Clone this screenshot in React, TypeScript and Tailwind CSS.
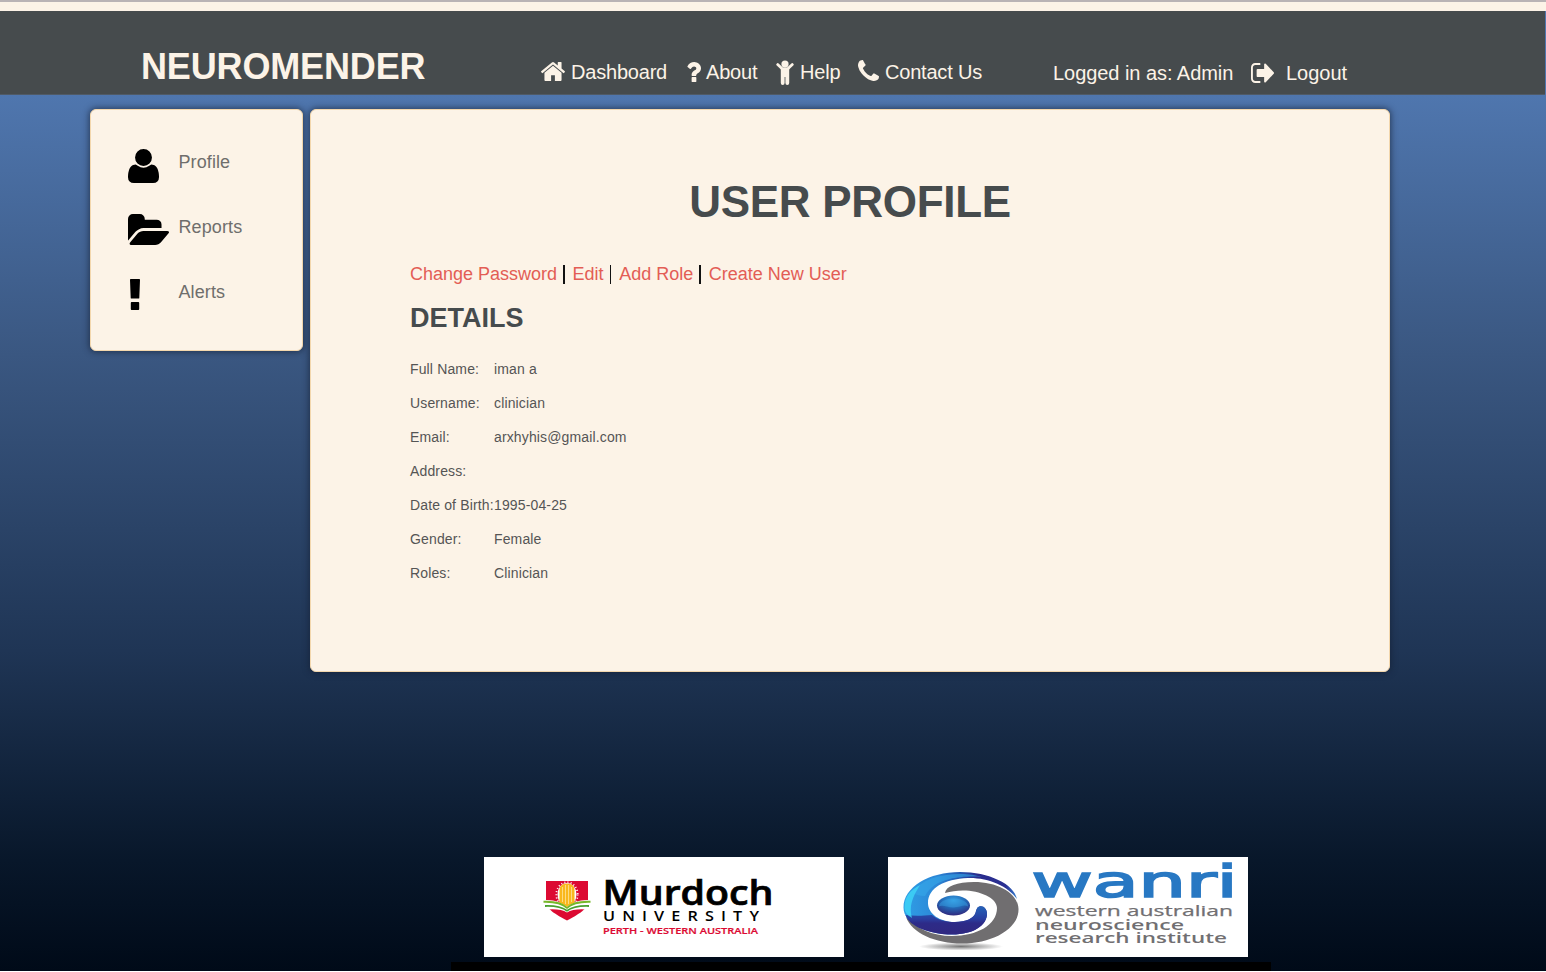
import React from 'react';

const ICONS = {
  home: 'M1408 992v480q0 26-19 45t-45 19h-384v-384h-256v384h-384q-26 0-45-19t-19-45v-480q0-1 .5-3t.5-3l575-474 575 474q1 2 1 6zm223-69l-62 74q-8 9-21 11h-3q-13 0-21-7l-692-577-692 577q-12 8-24 7-13-2-21-11l-62-74q-8-10-7-23.5t11-21.5l719-599q32-26 76-26t76 26l244 204v-195q0-14 9-23t23-9h192q14 0 23 9t9 23v408l219 182q10 8 11 21.5t-7 23.5z',
  question: 'M1088 1256v240q0 16-12 28t-28 12h-240q-16 0-28-12t-12-28v-240q0-16 12-28t28-12h240q16 0 28 12t12 28zm316-600q0 54-15.5 101t-35 76.5-55 59.5-57.5 43.5-61 35.5q-41 23-68.5 65t-27.5 67q0 17-12 32.5t-28 15.5h-240q-15 0-25.5-18.5t-10.5-37.5v-45q0-83 65-156.5t143-108.5q59-27 84-56t25-76q0-42-46.5-74t-107.5-32q-65 0-108 29-35 25-107 115-13 16-31 16-12 0-25-8l-164-125q-13-10-15.5-25t5.5-28q160-266 464-266 80 0 161 31t146 83 106 127.5 41 158.5z',
  phone: 'M1600 1240q0 27-10 70.5t-21 68.5q-21 50-122 106-94 51-186 51-27 0-52.5-3.5t-57.5-12.5-47.5-14.5-55.5-20.5-49-18q-98-35-175-83-128-79-264.5-215.5t-215.5-264.5q-48-77-83-175-3-9-18-49t-20.5-55.5-14.5-47.5-12.5-57.5-3.5-52.5q0-92 51-186 56-101 106-122 25-11 68.5-21t70.5-10q14 0 21 3 18 6 53 76 11 19 30 54t35 63.5 31 53.5q3 4 17.5 25t21.5 35.5 7 28.5q0 20-28.5 50t-62 55-62 53-28.5 46q0 9 5 22.5t8.5 20.5 14 24 11.5 19q76 137 174 235t235 174q2 1 19 11.5t24 14 20.5 8.5 22.5 5q18 0 46-28.5t53-62 55-62 50-28.5q14 0 28.5 7t35.5 21.5 25 17.5q25 15 53.5 31t63.5 35 54 30q70 35 76 53 3 7 3 21z',
  signOut: 'M704 1440q0 4 1 20t.5 26.5-3 23.5-10 19.5-20.5 6.5h-320q-119 0-203.5-84.5t-84.5-203.5v-704q0-119 84.5-203.5t203.5-84.5h320q13 0 22.5 9.5t9.5 22.5q0 4 1 20t.5 26.5-3 23.5-10 19.5-20.5 6.5h-320q-66 0-113 47t-47 113v704q0 66 47 113t113 47h312l11.5 1 11.5 3 8 5.5 7 9 2 13.5zm928-544q0 26-19 45l-544 544q-19 19-45 19t-45-19-19-45v-288h-448q-26 0-45-19t-19-45v-384q0-26 19-45t45-19h448v-288q0-26 19-45t45-19 45 19l544 544q19 19 19 45z',
  user: 'M1600 1405q0 120-73 189.5t-194 69.5h-874q-121 0-194-69.5t-73-189.5q0-53 3.5-103.5t14-109 26.5-108.5 43-97.5 62-81 85.5-53.5 111.5-20q9 0 42 21.5t74.5 48 108 48 133.5 21.5 133.5-21.5 108-48 74.5-48 42-21.5q61 0 111.5 20t85.5 53.5 62 81 43 97.5 26.5 108.5 14 109 3.5 103.5zm-320-893q0 159-112.5 271.5t-271.5 112.5-271.5-112.5-112.5-271.5 112.5-271.5 271.5-112.5 271.5 112.5 112.5 271.5z',
  folder: 'M1815 952q0 31-31 66l-336 396q-43 51-120.5 86.5t-143.5 35.5h-1088q-34 0-60.5-13t-26.5-43q0-31 31-66l336-396q43-51 120.5-86.5t143.5-35.5h1088q34 0 60.5 13t26.5 43zm-343-344v160h-832q-94 0-197 47.5t-164 119.5l-337 396-5 6q0-4-.5-12.5t-.5-12.5v-960q0-92 66-158t158-66h320q92 0 158 66t66 158v32h544q92 0 158 66t66 158z',
};

function Glyph({ d, box, className }: { d: string; box: string; className: string }) {
  return (
    <svg viewBox={box} preserveAspectRatio="none" className={`shrink-0 ${className}`} fill="currentColor">
      <path d={d} />
    </svg>
  );
}

function ChildIcon() {
  return (
    <svg viewBox="0 0 18 25" className="mt-[13px] h-[25px] w-[18px] shrink-0" fill="currentColor">
      <circle cx="9" cy="4" r="3.6" />
      <path d="M1.7 4.6 6.2 8.8h5.6l4.5-4.200" fill="none" stroke="currentColor" strokeWidth="2.8" strokeLinecap="round" strokeLinejoin="round" />
      <path d="M4.8 7.8h8.400v15.200a1.800 1.800 0 0 1-3.800 0V17h-.8v6a1.800 1.800 0 0 1-3.800 0z" />
    </svg>
  );
}

function MurdochLogo() {
  return (
    <svg viewBox="0 0 360 100" className="h-[100px] w-[360px] bg-white">
      <path d="M62 24h42v19c0 8-5 12-21 20.500C67 55 62 51 62 43z" fill="#dc0a32" />
      <ellipse cx="83" cy="37.500" rx="9.500" ry="11.500" fill="#fff" />
      <ellipse cx="83" cy="37.500" rx="10.700" ry="12.300" fill="none" stroke="#fff" strokeWidth="1.800" strokeDasharray="1 2.200" />
      <path d="M59.500 43q15-1 23.500 6.500Q91.500 42 106.500 43v6l-4 3.500q-13-1-19.500 3-6.500-4-19.500-3l-4-3.500z" fill="#fff" />
      <path d="M75.500 33q0-6.500 7.500-6.500t7.500 6.500v13q-4 1-7.500 4-3.500-3-7.500-4z" fill="#f9b81d" />
      <path d="M78.500 30v15M81.500 28v19M84.500 28v19M87.500 30v15" stroke="#fff4c8" strokeWidth=".6" />
      <path d="M59.500 43.700q17-.7 23.500 6.300 6.500-7 23.500-6.300v2.100q-16-.5-23.500 6.200-7.500-6.700-23.500-6.200z" fill="#76b82a" />
      <path d="M61 48q15-.5 22 4.700 7-5.200 22-4.700v1.900q-15-.5-22 4.800-7-5.300-22-4.800z" fill="#4aa02f" />
      <text x="118.500" y="48" fontFamily="Open Sans" fontSize="33.500" fontWeight="600" stroke="#000" strokeWidth=".7" textLength="171" lengthAdjust="spacingAndGlyphs">Murdoch</text>
      <g transform="translate(119 63.500) scale(1.200 1)">
        <text x="0" y="0" fontFamily="Open Sans" fontSize="13.500" fontWeight="600" textLength="130" lengthAdjust="spacing">UNIVERSITY</text>
      </g>
      <text x="119" y="77" fontFamily="Open Sans" fontSize="9" fontWeight="600" fill="#dc0a32" stroke="#dc0a32" strokeWidth=".2" textLength="155" lengthAdjust="spacingAndGlyphs">PERTH - WESTERN AUSTRALIA</text>
    </svg>
  );
}

function WanriLogo() {
  return (
    <svg viewBox="0 0 360 100" className="h-[100px] w-[360px] bg-white">
      <defs>
        <radialGradient id="shade">
          <stop offset="0" stopColor="#777" />
          <stop offset="1" stopColor="#fff" />
        </radialGradient>
        <linearGradient id="iris" x1="0" y1="0" x2="1" y2="0">
          <stop offset="0" stopColor="#2f9fe6" />
          <stop offset=".3" stopColor="#2c86d6" />
          <stop offset=".5" stopColor="#2458b0" />
          <stop offset=".65" stopColor="#2a2c8c" />
          <stop offset=".9" stopColor="#2a2f92" />
          <stop offset="1" stopColor="#3580d0" />
        </linearGradient>
        <linearGradient id="lower" x1="0" y1="0" x2="0" y2="1">
          <stop offset="0" stopColor="#2463b8" />
          <stop offset=".45" stopColor="#2a3ea0" />
          <stop offset=".6" stopColor="#2d2b88" />
          <stop offset="1" stopColor="#302880" />
        </linearGradient>
        <radialGradient id="pupil" cx=".5" cy=".25" r=".75">
          <stop offset="0" stopColor="#36a2e6" />
          <stop offset=".5" stopColor="#2368b5" />
          <stop offset="1" stopColor="#30297f" />
        </radialGradient>
      </defs>
      <ellipse cx="73" cy="89.500" rx="42" ry="4" fill="url(#shade)" />
      <path d="M18 60C28 71 44 79 64 79c25 0 45-11 45-28C109 41 92 33.500 75 33.500c-7 0-12 1-18 2.500C58 29 69 25 86 25c24 0 44 11 44.500 27C131 72 104 86.500 74 86.500 47 86.500 24 76 18 60z" fill="#706e70" />
      <path d="M15.500 50.500C15.500 30 41 15 72 15c29 0 54 12 57 27C120 29 100 20.500 80 21 56 22 40 31 40 46c0 11 12 19 27 19 11 0 19-4 20.500-9 1-3.500 1.500-6.500 5-6.800 3.500-.3 6.500 3.300 6.500 7.300C99 68 86 77.500 64 77.500 39 77.500 15.500 67 15.500 50.500z" fill="url(#iris)" />
      <path d="M17.500 58c8 1 16 1 26.500 0 5 4.500 13 7 23 7 11 0 19-4 20.500-9 1-3.500 1.500-6.500 5-6.800 3.500-.3 6.500 3.300 6.500 7.300C99 68 86 77.500 64 77.500 42 77.500 21 69.500 17.500 58z" fill="url(#lower)" />
      <path d="M24 35C34 23 50 17 72 17c10 0 15 1 22 3-10-1-24 0-32 2-13 3-20 8-25 17-5 0-9-1-13-4z" fill="#36a8ea" opacity=".6" />
      <path d="M16.500 50.500C16.500 40 22 33 32 28c-5 8-8 14-9 21-.5 5 0 8 1 12-5-3-7.500-6-7.500-10.500z" fill="#3fd6f8" opacity=".8" />
      <ellipse cx="65.500" cy="48.500" rx="16.500" ry="10" fill="url(#pupil)" />
      <path d="M51 49.500a14.500 8 0 0 1 29 0c-4-2.500-8 1-14.500 1S55 47.500 51 49.500z" fill="#3aa4e6" opacity=".45" />
      <text x="143.500" y="40" fontFamily="DejaVu Sans" fontSize="45" fill="#2878c3" stroke="#2878c3" strokeWidth="1.700" textLength="206" lengthAdjust="spacingAndGlyphs">wanri</text>
      <g fontFamily="Open Sans" fontSize="14.500" fill="#716f72">
        <text x="147" y="59" fontWeight="400" stroke="#716f72" strokeWidth=".25" textLength="198" lengthAdjust="spacingAndGlyphs">western australian</text>
        <text x="147" y="72.500" fontWeight="600" textLength="149" lengthAdjust="spacingAndGlyphs">neuroscience</text>
        <text x="147" y="86" fontWeight="600" textLength="192" lengthAdjust="spacingAndGlyphs">research institute</text>
      </g>
    </svg>
  );
}

const DETAILS = [
  ['Full Name:', 'iman a'],
  ['Username:', 'clinician'],
  ['Email:', 'arxhyhis@gmail.com'],
  ['Address:', ''],
  ['Date of Birth:', '1995-04-25'],
  ['Gender:', 'Female'],
  ['Roles:', 'Clinician'],
];

const LINKS = ['Change Password', 'Edit', 'Add Role', 'Create New User'];

export default function App() {
  return (
    <div className="flex h-[972px] w-[1546px] flex-col overflow-hidden bg-white font-['Liberation_Sans',Arial,sans-serif]">
      <div className="h-[2px] shrink-0 bg-[#b9b3b5]" />
      <div className="h-[9px] shrink-0 bg-[#fcf3e7]" />
      <div className="flex h-[960px] shrink-0 flex-col bg-[linear-gradient(180deg,#4f77af_0px,#4f76ae_84px,#3a5781_344px,#1f3555_640px,#08172a_850px,#000a18_960px)]">
        <header className="mr-px flex h-[84px] shrink-0 border-b border-[#505a66] bg-[#464b4d] text-[20px] leading-[28px] whitespace-nowrap text-[#fcf3e7]">
          <div className="w-[541px] shrink-0 pt-[35px] pl-[141px] text-[36px] leading-[41px] font-bold tracking-[-0.15px]">NEUROMENDER</div>
          <nav className="flex w-[512px] shrink-0 pt-[36px]">
            <a className="flex w-[145px]">
              <Glyph d={ICONS.home} box="24 250 1616 1286" className="mt-[15px] mr-[6px] h-[19px] w-[24px]" />
              <span className="mt-[11px] tracking-[-0.2px]">Dashboard</span>
            </a>
            <a className="flex w-[90px]">
              <Glyph d={ICONS.question} box="386 256 1018 1280" className="mt-[15px] mr-[5px] h-[20px] w-[15px]" />
              <span className="mt-[11px] tracking-[-0.2px]">About</span>
            </a>
            <a className="flex w-[82px]">
              <ChildIcon />
              <span className="mt-[11px] ml-[6px] tracking-[-0.2px]">Help</span>
            </a>
            <a className="flex">
              <Glyph d={ICONS.phone} box="192 128 1408 1408" className="mt-[13px] mr-[6px] h-[21px] w-[21px]" />
              <span className="mt-[11px] tracking-[-0.2px]">Contact Us</span>
            </a>
          </nav>
          <div className="flex pt-[37px]">
            <span className="mt-[11px] w-[198px] tracking-[-0.05px]">Logged in as: Admin</span>
            <Glyph d={ICONS.signOut} box="64 256 1568 1280" className="mt-[15px] mr-[12px] h-[20px] w-[23px]" />
            <a className="mt-[11px]">Logout</a>
          </div>
        </header>
        <div className="flex h-[762px] shrink-0 items-start gap-[7px] pt-[14px] pl-[90px]">
          <aside className="h-[242px] w-[213px] rounded-[6px] border border-[#f3d7ad] bg-[#fcf3e7] pt-[37px] pl-[37px] text-[18px] leading-[31px] tracking-[0.1px] text-[#6f6e6c] shadow-[0_0_6px_1px_rgba(20,30,50,0.65)]">
            <div className="flex h-[65px]">
              <div className="w-[50.5px] pt-[2px] text-black">
                <Glyph d={ICONS.user} box="192 128 1408 1536" className="h-[34px] w-[31px]" />
              </div>
              <span>Profile</span>
            </div>
            <div className="flex h-[65px]">
              <div className="w-[50.5px] pt-[2px] text-black">
                <Glyph d={ICONS.folder} box="-64 128 1879 1408" className="h-[31px] w-[41px]" />
              </div>
              <span>Reports</span>
            </div>
            <div className="flex h-[65px]">
              <div className="w-[50.5px] pt-[2px] text-black">
                <svg viewBox="0 0 10 31" className="ml-[2px] h-[31px] w-[10px]">
                  <path d="M0 .7Q0 0 .7 0h8.600q.7 0 .7.7L9.300 19q0 .6-.7.6H1.400q-.7 0-.7-.6zM.8 24q0-1 .8-1h6.800q.8 0 .8 1v6q0 1-.8 1H1.600q-.8 0-.8-1z" />
                </svg>
              </div>
              <span>Alerts</span>
            </div>
          </aside>
          <main className="h-[563px] w-[1080px] rounded-[6px] border border-[#f3d7ad] bg-[#fcf3e7] px-[99px] pt-[65px] shadow-[0_0_6px_1px_rgba(20,30,50,0.65)]">
            <h1 className="text-center text-[44px] leading-[54px] font-bold tracking-[-0.3px] text-[#464b4d]">USER PROFILE</h1>
            <div className="mt-[33px] flex h-[24px] text-[18px] leading-[24px] whitespace-pre text-[#e35d55]">
              {LINKS.map((link, i) => (
                <React.Fragment key={link}>
                  {i > 0 && <span className="mt-[3px] mr-[8px] ml-[6px] h-[19px] w-[1.5px] bg-[#111]" />}
                  <a>{link}</a>
                </React.Fragment>
              ))}
            </div>
            <h2 className="mt-[14px] text-[27px] leading-[36px] font-bold text-[#464b4d]">DETAILS</h2>
            <dl className="mt-[16px] grid grid-cols-[84px_1fr] text-[14px] leading-[34px] tracking-[0.14px] text-[#555]">
              {DETAILS.map(([k, v]) => (
                <React.Fragment key={k}>
                  <dt className="h-[34px] whitespace-nowrap">{k}</dt>
                  <dd className="h-[34px]">{v}</dd>
                </React.Fragment>
              ))}
            </dl>
          </main>
        </div>
        <footer className="flex h-[105px] shrink-0 gap-[44px] pl-[484px]">
          <MurdochLogo />
          <WanriLogo />
        </footer>
        <div className="ml-[451px] h-[9px] w-[820px] bg-black" />
      </div>
    </div>
  );
}
